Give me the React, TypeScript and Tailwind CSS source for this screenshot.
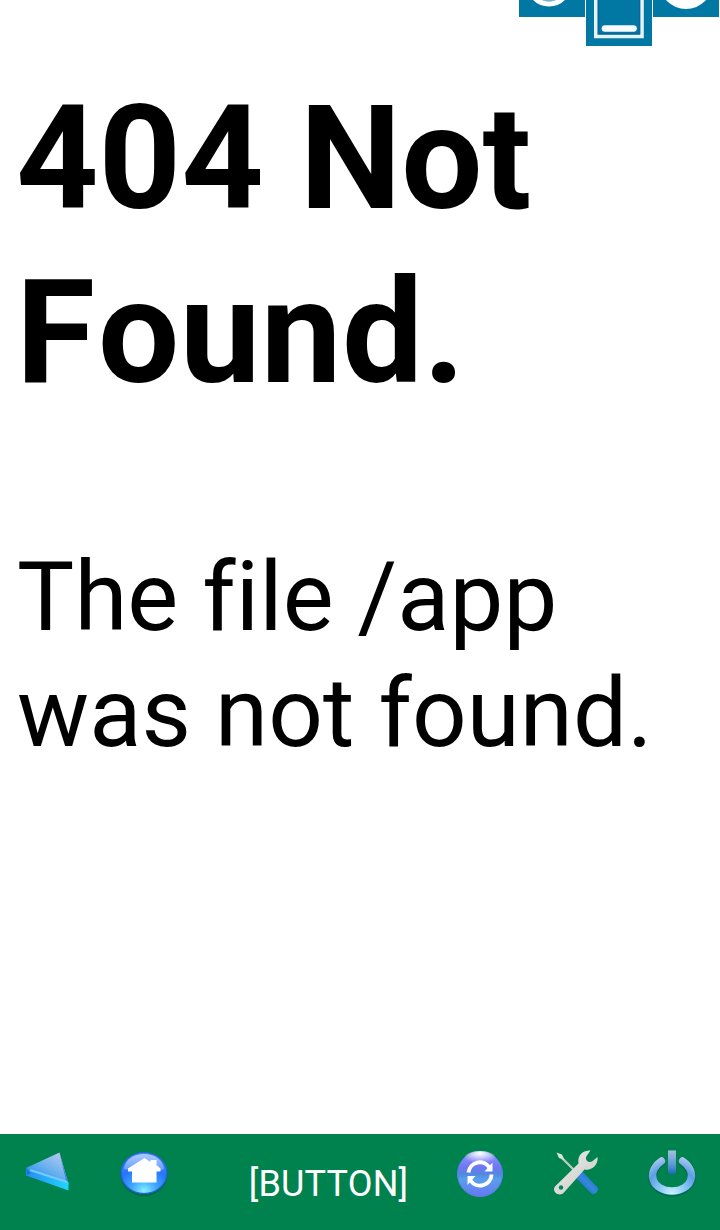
import type { ReactNode } from "react";

function CornerTiles() {
  return (
    <div className="flex h-[72px] items-start justify-end gap-px pr-px">
      <svg className="h-[17px] w-[66px] bg-[#0078a3]" viewBox="0 0 66 17">
        <g className="blur-[0.6px]">
          <circle cx="30" cy="-16.5" r="18" fill="#79b5cd" />
          <circle cx="30" cy="-16.5" r="20.5" fill="none" stroke="#fff" strokeWidth="5" />
        </g>
      </svg>
      <svg className="h-[46px] w-[66px] bg-[#0078a3]" viewBox="0 0 66 46">
        <g className="blur-[0.6px]">
          <path d="M9.8-5V36.5H56V-5" fill="none" stroke="#e6f2f8" strokeWidth="3.6" />
          <path d="M12.5-5V33.5H53.5V-5" fill="none" stroke="#0a6797" strokeWidth="1.5" />
          <path d="M19 28.5H47.5" stroke="#f8fcff" strokeWidth="6.6" strokeLinecap="round" />
        </g>
      </svg>
      <svg className="h-[17px] w-[66px] bg-[#0078a3]" viewBox="0 0 66 17">
        <circle className="blur-[0.6px]" cx="33" cy="-18" r="27" fill="#fff" />
      </svg>
    </div>
  );
}

function BackIcon() {
  return (
    <svg className="h-20 w-24 blur-[0.6px]" viewBox="0 1134 96 80">
      <defs>
        <linearGradient id="backFace" x1="1" y1="0" x2=".25" y2="1">
          <stop offset="0" stopColor="#c3cdec" />
          <stop offset=".5" stopColor="#70b4ee" />
          <stop offset="1" stopColor="#168be9" />
        </linearGradient>
        <linearGradient id="backEdge">
          <stop offset="0" stopColor="#278cf0" />
          <stop offset="1" stopColor="#20d5ff" />
        </linearGradient>
      </defs>
      <path d="M26 1169L59.5 1153 69 1190.5 26 1176Z" fill="#075f63" opacity=".45" />
      <path d="M26 1168L59.5 1152.5 68.5 1184 67 1185Z" fill="url(#backFace)" />
      <path d="M59.5 1152.5L68.5 1184 66.5 1183Z" fill="#4087df" />
      <path d="M26 1168L68.5 1182V1190.5L26 1175.5Z" fill="url(#backEdge)" />
      <path d="M30 1170L67 1182" stroke="#7bc8ff" strokeWidth="2" />
      <path d="M26.5 1168.5L31 1173.5 27 1175Z" fill="#1173df" />
    </svg>
  );
}

function HomeIcon() {
  return (
    <svg className="h-20 w-24 blur-[0.6px]" viewBox="96 1134 96 80">
      <defs>
        <radialGradient id="homeOrb" cx=".5" cy=".94" r=".9">
          <stop offset="0" stopColor="#87f0ff" />
          <stop offset=".3" stopColor="#43a9ff" />
          <stop offset=".65" stopColor="#2675fa" />
          <stop offset="1" stopColor="#4a86fc" />
        </radialGradient>
        <linearGradient id="homeShine" x1="0" y1="0" x2="0" y2="1">
          <stop offset="0" stopColor="#c8dcff" />
          <stop offset="1" stopColor="#6fa2fb" />
        </linearGradient>
      </defs>
      <ellipse cx="144" cy="1175" rx="23.5" ry="21" fill="#075346" opacity=".55" />
      <ellipse cx="144" cy="1173" rx="22.8" ry="20.5" fill="url(#homeOrb)" stroke="#2863dd" strokeWidth="1.2" />
      <path d="M124 1169C126 1149 162 1149 164 1169C155 1174 134 1171 124 1169Z" fill="url(#homeShine)" opacity=".8" />
      <path d="M144.5 1158L150.5 1162V1160H156.5V1165L160.5 1168.5V1171.5H156.5V1182.5H132V1171.5H128V1168.5Z" fill="#fff" />
    </svg>
  );
}

function RefreshIcon() {
  return (
    <svg className="h-20 w-24 blur-[0.6px]" viewBox="432 1134 96 80">
      <defs>
        <linearGradient id="refreshOrb" x1="0" y1="0" x2="0" y2="1">
          <stop offset="0" stopColor="#939af9" />
          <stop offset=".35" stopColor="#7175f4" />
          <stop offset=".5" stopColor="#5288df" />
          <stop offset=".62" stopColor="#58a0eb" />
          <stop offset="1" stopColor="#6975f5" />
        </linearGradient>
        <radialGradient id="refreshShine" cx=".5" cy=".15" r=".6">
          <stop offset="0" stopColor="#fff" />
          <stop offset="1" stopColor="#fff" stopOpacity="0" />
        </radialGradient>
      </defs>
      <circle cx="480" cy="1174" r="22.6" fill="url(#refreshOrb)" stroke="#5382d9" />
      <ellipse cx="480" cy="1159" rx="16" ry="8" fill="url(#refreshShine)" />
      <g fill="none" stroke="#fff" strokeWidth="4">
        <path d="M468.5 1172.5A11.5 11.5 0 0 1 489.5 1167.5" />
        <path d="M491.5 1174.5A11.5 11.5 0 0 1 470.5 1180.5" />
      </g>
      <path d="M492.5 1162.5V1171.5H484.5Z M467.5 1185V1176H475.5Z" fill="#fff" />
    </svg>
  );
}

function ToolsIcon() {
  return (
    <svg className="h-20 w-24 blur-[0.6px]" viewBox="528 1134 96 80">
      <defs>
        <linearGradient id="wrench" x1="0" y1="0" x2="1" y2="1">
          <stop offset="0" stopColor="#eeeeea" />
          <stop offset="1" stopColor="#c4c9c7" />
        </linearGradient>
        <linearGradient id="handle" x1="0" y1="1" x2="1" y2="0">
          <stop offset="0" stopColor="#1754ad" />
          <stop offset=".5" stopColor="#3488df" />
          <stop offset="1" stopColor="#235fb1" />
        </linearGradient>
      </defs>
      <path d="M562 1158L575 1171" stroke="#becbc3" strokeWidth="2.3" />
      <path d="M556.5 1152.5L562 1154.5 564.5 1160 559 1158Z" fill="#e0e2e0" />
      <path d="M575 1177L581.5 1170.5 598 1188C598.5 1191 595 1195 592 1194Z" fill="url(#handle)" />
      <path
        d="M590.5 1150.5C583.5 1150 577 1155 578.5 1163.5L555.5 1186C551.5 1190 556.5 1197 563 1193.5L584.5 1169.5C592 1171 598.5 1165 597.5 1157L592 1161.5C588 1163.5 584 1159 587 1155.5Z"
        fill="url(#wrench)"
      />
      <circle cx="561" cy="1187.5" r="2.2" fill="#0b8555" />
    </svg>
  );
}

function PowerIcon() {
  return (
    <svg className="h-20 w-24 blur-[0.6px]" viewBox="624 1134 96 80">
      <defs>
        <radialGradient id="powerRing" gradientUnits="userSpaceOnUse" cx="672" cy="1194" r="38">
          <stop offset="0" stopColor="#c9f6ff" />
          <stop offset=".35" stopColor="#8bc9f5" />
          <stop offset=".7" stopColor="#5c9ee2" />
          <stop offset="1" stopColor="#a9cbed" />
        </radialGradient>
        <linearGradient id="powerBar" x1="0" y1="0" x2="0" y2="1">
          <stop offset="0" stopColor="#a6c1df" />
          <stop offset=".6" stopColor="#5a98d5" />
          <stop offset="1" stopColor="#1d65b8" />
        </linearGradient>
      </defs>
      <g fill="none" strokeLinecap="round">
        <path d="M661.5 1161.5C645 1173.5 653 1192 672 1192C691 1192 699 1173.5 682.5 1161.5" stroke="#075c59" strokeWidth="9" opacity=".6" />
        <path d="M661.5 1161C645 1172.5 653 1191 672 1191C691 1191 699 1172.5 682.5 1161" stroke="url(#powerRing)" strokeWidth="7.4" />
      </g>
      <path d="M668 1150.5H676V1171C676 1175.5 668 1175.5 668 1171Z" fill="url(#powerBar)" />
    </svg>
  );
}

function NavButton({ label, children }: { label: string; children: ReactNode }) {
  return (
    <button type="button" aria-label={label} className="h-24 w-24 shrink-0">
      <span className="flex h-24 items-start">{children}</span>
    </button>
  );
}

export default function App() {
  return (
    <div className="flex h-[1230px] w-[720px] flex-col overflow-hidden bg-white font-['Roboto',sans-serif] text-black [font-variant-ligatures:none]">
      <CornerTiles />
      <main className="flex-1 pl-4">
        <h1 className="text-[144px] leading-[174px] font-bold">
          404 Not
          <br />
          <span className="tracking-[3px]">F</span>
          <span className="tracking-[0.4px]">ound.</span>
        </h1>
        <p className="mt-[119px] pl-px text-[96px] leading-[116px] tracking-[0.1px]">
          The file /app
          <br />
          was not found.
        </p>
      </main>
      <nav className="flex h-24 shrink-0 bg-[#00824f]">
        <NavButton label="Back"><BackIcon /></NavButton>
        <NavButton label="Home"><HomeIcon /></NavButton>
        <button type="button" className="flex w-60 items-center justify-center pt-1 pl-[33px] text-4xl tracking-[0.2px] text-white">
          [BUTTON]
        </button>
        <NavButton label="Refresh"><RefreshIcon /></NavButton>
        <NavButton label="Tools"><ToolsIcon /></NavButton>
        <NavButton label="Power"><PowerIcon /></NavButton>
      </nav>
    </div>
  );
}
